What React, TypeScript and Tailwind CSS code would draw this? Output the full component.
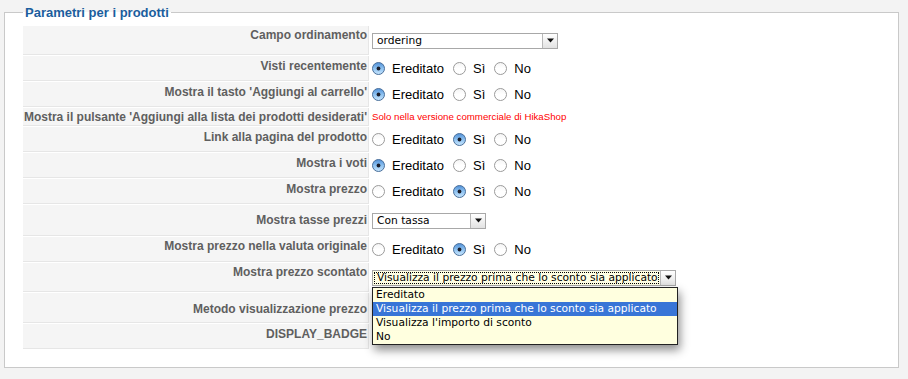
import React from "react";

function Radio({ checked }: { checked?: boolean }) {
  return (
    <svg width="13" height="13" viewBox="0 0 13 13" className="shrink-0">
      <defs>
        <linearGradient id="rg-off" x1="0" y1="0" x2="0" y2="1">
          <stop offset="0" stopColor="#f4f4f4" />
          <stop offset="0.5" stopColor="#ffffff" />
          <stop offset="1" stopColor="#ffffff" />
        </linearGradient>
        <linearGradient id="rg-on" x1="0" y1="0" x2="0" y2="1">
          <stop offset="0" stopColor="#4f8fd6" />
          <stop offset="0.5" stopColor="#8ec2f1" />
          <stop offset="1" stopColor="#c9e6fd" />
        </linearGradient>
      </defs>
      <circle
        cx="6.5"
        cy="6.5"
        r="6"
        fill={checked ? "url(#rg-on)" : "url(#rg-off)"}
        stroke={checked ? "#4a6f9a" : "#9a9a9a"}
        strokeWidth="1"
      />
      {checked && <circle cx="6.5" cy="6.5" r="1.9" fill="#1c1f2b" />}
    </svg>
  );
}

function RadioGroup({ value }: { value: 0 | 1 | 2 }) {
  const opts = ["Ereditato", "Sì", "No"];
  return (
    <div className="flex items-center text-[13px] leading-[15px] text-black">
      {opts.map((o, i) => (
        <div key={o} className={"flex items-center " + (i === 0 ? "" : "ml-[9px]")}>
          <Radio checked={value === i} />
          <span className="ml-[7px]">{o}</span>
        </div>
      ))}
    </div>
  );
}

function Arrow() {
  return (
    <div className="w-[15px] self-stretch border-l border-[#b8b8b8] bg-[linear-gradient(#ffffff,#e2e2e2)] flex items-center justify-center">
      <svg width="7" height="5" viewBox="0 0 7 5">
        <path d="M0 0.5 H7 L3.5 4.5 Z" fill="#111" />
      </svg>
    </div>
  );
}

function Select({ text, width, focused }: { text: string; width: string; focused?: boolean }) {
  return (
    <div
      className={
        "flex h-[16px] border border-[#a8a8a8] " +
        width +
        (focused ? " bg-[#ffffe4]" : " bg-white")
      }
    >
      <div className="flex-1 flex items-center min-w-0 p-px">
        <span
          className={
            "flex-1 h-full flex items-center pl-[2px] text-[10.7px] leading-[12px] text-black whitespace-nowrap overflow-hidden font-['DejaVu_Sans',sans-serif] " +
            (focused ? "border border-dotted border-black" : "border border-transparent")
          }
        >
          {text}
        </span>
      </div>
      <Arrow />
    </div>
  );
}

type Row = {
  label: string;
  h: string;
  pt: string;
  value: React.ReactNode;
};

export default function App() {
  const rows: Row[] = [
    {
      label: "Campo ordinamento",
      h: "h-[29px]",
      pt: "pt-[2px]",
      value: <Select text="ordering" width="w-[186px]" />,
    },
    { label: "Visti recentemente", h: "h-[25px]", pt: "pt-[3px]", value: <RadioGroup value={0} /> },
    {
      label: "Mostra il tasto 'Aggiungi al carrello'",
      h: "h-[25px]",
      pt: "pt-[3px]",
      value: <RadioGroup value={0} />,
    },
    {
      label: "Mostra il pulsante 'Aggiungi alla lista dei prodotti desiderati'",
      h: "h-[18px]",
      pt: "pt-[2px]",
      value: (
        <span className="text-[9.7px] leading-[12px] text-[#ff0000]">
          Solo nella versione commerciale di HikaShop
        </span>
      ),
    },
    { label: "Link alla pagina del prodotto", h: "h-[25px]", pt: "pt-[3px]", value: <RadioGroup value={1} /> },
    { label: "Mostra i voti", h: "h-[25px]", pt: "pt-[3px]", value: <RadioGroup value={0} /> },
    { label: "Mostra prezzo", h: "h-[25px]", pt: "pt-[3px]", value: <RadioGroup value={1} /> },
    {
      label: "Mostra tasse prezzi",
      h: "h-[31px]",
      pt: "pt-[8px]",
      value: <Select text="Con tassa" width="w-[114px]" />,
    },
    {
      label: "Mostra prezzo nella valuta originale",
      h: "h-[25px]",
      pt: "pt-[2px]",
      value: <RadioGroup value={1} />,
    },
    {
      label: "Mostra prezzo scontato",
      h: "h-[29px]",
      pt: "pt-[2px]",
      value: (
        <div className="relative">
          <Select
            text="Visualizza il prezzo prima che lo sconto sia applicato"
            width="w-[304px]"
            focused
          />
          <div className="absolute left-0 top-[17px] z-10 w-[306px] border border-[#222] bg-[#ffffdf] shadow-[2px_5px_9px_rgba(0,0,0,0.45)] font-['DejaVu_Sans',sans-serif] text-[10.7px] leading-[14px] text-black">
            <div className="h-[14px] pl-[3px] whitespace-nowrap">Ereditato</div>
            <div className="h-[14px] pl-[3px] whitespace-nowrap bg-[#3875d7] text-white">
              Visualizza il prezzo prima che lo sconto sia applicato
            </div>
            <div className="h-[14px] pl-[3px] whitespace-nowrap">Visualizza l'importo di sconto</div>
            <div className="h-[14px] pl-[3px] whitespace-nowrap">No</div>
          </div>
        </div>
      ),
    },
    {
      label: "Metodo visualizzazione prezzo",
      h: "h-[30px]",
      pt: "pt-[9px]",
      value: null,
    },
    { label: "DISPLAY_BADGE", h: "h-[25px]", pt: "pt-[3px]", value: null },
  ];

  return (
    <div className="w-[908px] h-[379px] overflow-hidden bg-[#f3f3f3] pl-[4px] pt-[5px] font-['Liberation_Sans',Arial,sans-serif]">
      <fieldset className="w-[895px] h-[363px] border border-[#c9c9c9] bg-white pl-[18px] pr-[16px] pt-[6px]">
        <legend className="px-[2px] text-[13px] leading-[15px] font-bold text-[#1b5e9e]">
          Parametri per i prodotti
        </legend>
        <div className="flex flex-col gap-px">
          {rows.map((r) => (
            <div key={r.label} className={"flex " + r.h}>
              <div
                className={
                  "w-[346px] shrink-0 bg-[#f5f5f5] border-b border-r border-[#e6e6e6] text-right pr-[1px] text-[12px] leading-[14px] font-bold text-[#5f5f5f] whitespace-nowrap " +
                  r.pt
                }
              >
                {r.label}
              </div>
              <div className="flex-1 flex items-center pl-[3px]">{r.value}</div>
            </div>
          ))}
        </div>
      </fieldset>
    </div>
  );
}
